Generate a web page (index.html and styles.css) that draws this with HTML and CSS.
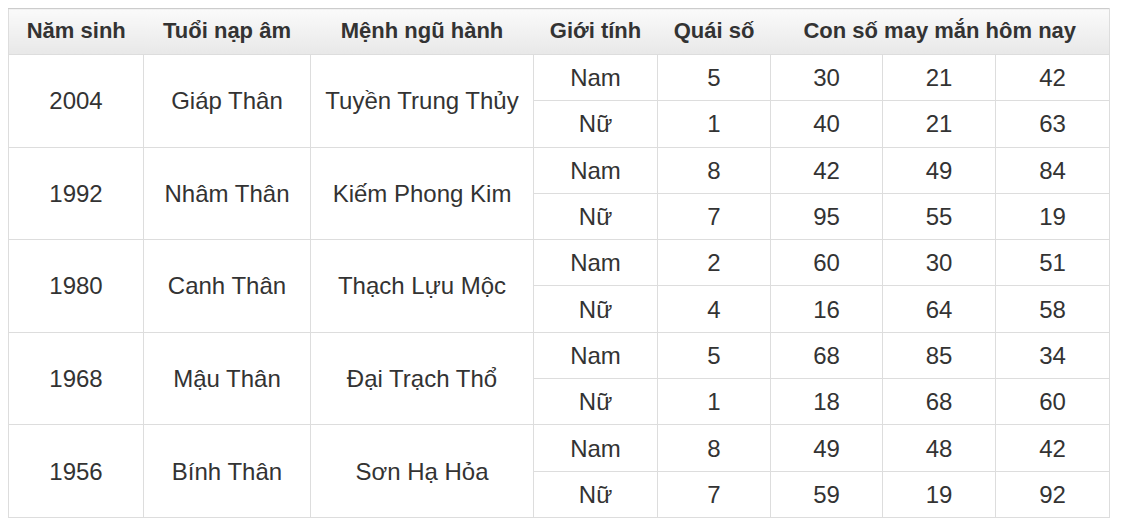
FILE: index.html
```html
<!DOCTYPE html>
<html lang="vi">
<head>
<meta charset="utf-8">
<title>Con số may mắn</title>
<link rel="stylesheet" href="styles.css">
</head>
<body>
<table class="lucky">
  <colgroup>
    <col class="c1"><col class="c2"><col class="c3"><col class="c4"><col class="c5"><col class="c6"><col class="c7"><col class="c8">
  </colgroup>
  <thead>
    <tr>
      <th>Năm sinh</th>
      <th>Tuổi nạp âm</th>
      <th>Mệnh ngũ hành</th>
      <th>Giới tính</th>
      <th>Quái số</th>
      <th colspan="3">Con số may mắn hôm nay</th>
    </tr>
  </thead>
  <tbody>
    <tr><td rowspan="2">2004</td><td rowspan="2">Giáp Thân</td><td rowspan="2">Tuyền Trung Thủy</td><td>Nam</td><td>5</td><td>30</td><td>21</td><td>42</td></tr>
    <tr><td>Nữ</td><td>1</td><td>40</td><td>21</td><td>63</td></tr>
    <tr><td rowspan="2">1992</td><td rowspan="2">Nhâm Thân</td><td rowspan="2">Kiếm Phong Kim</td><td>Nam</td><td>8</td><td>42</td><td>49</td><td>84</td></tr>
    <tr><td>Nữ</td><td>7</td><td>95</td><td>55</td><td>19</td></tr>
    <tr><td rowspan="2">1980</td><td rowspan="2">Canh Thân</td><td rowspan="2">Thạch Lựu Mộc</td><td>Nam</td><td>2</td><td>60</td><td>30</td><td>51</td></tr>
    <tr><td>Nữ</td><td>4</td><td>16</td><td>64</td><td>58</td></tr>
    <tr><td rowspan="2">1968</td><td rowspan="2">Mậu Thân</td><td rowspan="2">Đại Trạch Thổ</td><td>Nam</td><td>5</td><td>68</td><td>85</td><td>34</td></tr>
    <tr><td>Nữ</td><td>1</td><td>18</td><td>68</td><td>60</td></tr>
    <tr><td rowspan="2">1956</td><td rowspan="2">Bính Thân</td><td rowspan="2">Sơn Hạ Hỏa</td><td>Nam</td><td>8</td><td>49</td><td>48</td><td>42</td></tr>
    <tr><td>Nữ</td><td>7</td><td>59</td><td>19</td><td>92</td></tr>
  </tbody>
</table>
</body>
</html>
```
FILE: styles.css
```css
html, body {
  background: #ffffff;
}
body {
  margin: 8px;
  font-family: "Liberation Sans", Arial, sans-serif;
  color: #333333;
}
.lucky {
  border-collapse: collapse;
  table-layout: fixed;
  width: 1101px;
  font-size: 24px;
  border: 1px solid #dddddd;
}
.c1 { width: 135px; }
.c2 { width: 167px; }
.c3 { width: 223px; }
.c4 { width: 124px; }
.c5 { width: 113px; }
.c6 { width: 112px; }
.c7 { width: 113px; }
.c8 { width: 114px; }
.lucky th,
.lucky td {
  text-align: center;
  vertical-align: middle;
  padding: 0 4px;
  white-space: nowrap;
}
.lucky td {
  border: 1px solid #dddddd;
  height: 44.3px;
  padding-top: 1px;
}
.lucky th {
  height: 43px;
  padding-bottom: 2px;
  font-size: 22px;
  font-weight: bold;
  background: linear-gradient(#fafafa, #e8e8e8);
  border-top: 1px solid #cccccc;
  border-bottom: 1px solid #dddddd;
}
.lucky th:first-child {
  border-left: 1px solid #dddddd;
}
.lucky th:last-child {
  border-right: 1px solid #dddddd;
}
```
